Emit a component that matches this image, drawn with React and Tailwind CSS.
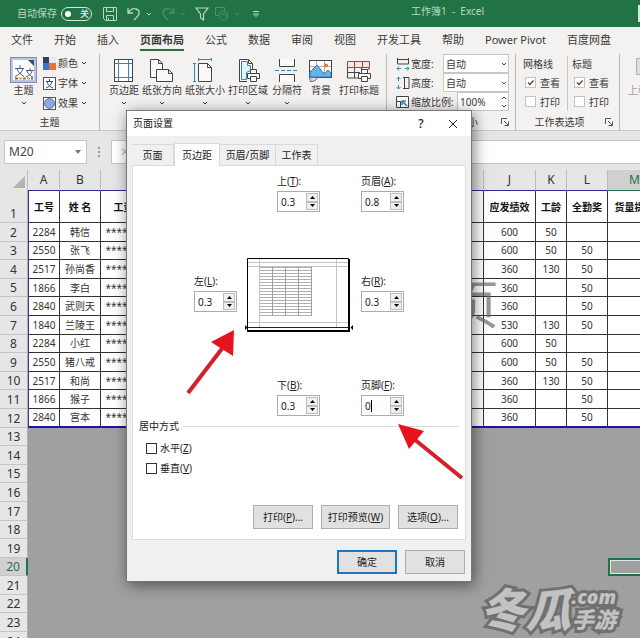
import { useState } from "react"
import clsx from "clsx"

const TABS = ["文件", "开始", "插入", "页面布局", "公式", "数据", "审阅", "视图", "开发工具", "帮助", "Power Pivot", "百度网盘"]

const ROWS = [
  ["2284", "韩信", "600", "50", ""],
  ["2550", "张飞", "600", "50", "50"],
  ["2517", "孙尚香", "360", "130", "50"],
  ["1866", "李白", "360", "", "50"],
  ["2840", "武则天", "360", "", "50"],
  ["1840", "兰陵王", "530", "130", "50"],
  ["2284", "小红", "600", "50", ""],
  ["2550", "猪八戒", "600", "50", "50"],
  ["2517", "和尚", "360", "130", "50"],
  ["1866", "猴子", "360", "", "50"],
  ["2840", "宫本", "360", "", "50"],
]

const EMPTY_ROWS = [13, 14, 15, 16, 17, 18, 19, 20, 21, 22, 23, 24]

// small shared pieces

function Chevron({ className }) {
  return (
    <svg viewBox="0 0 8 8" className={clsx("h-2 w-2 shrink-0", className)} fill="none" stroke="currentColor">
      <path d="M2 3l2 2 2-2" />
    </svg>
  )
}

function Launcher() {
  return (
    <button className="mr-1 flex h-3 w-3 items-center justify-center" aria-label="更多选项">
      <svg viewBox="0 0 8 8" className="h-2 w-2" fill="none" stroke="#555">
        <path d="M0.5 6V0.5H6M3 3l4 4M7.5 3.5v4h-4" />
      </svg>
    </button>
  )
}

// ribbon icons

const MarginsIcon = () => (
  <svg viewBox="0 0 28 26" className="h-[26px] w-7" fill="none">
    <rect x="4.5" y="2.5" width="18" height="22" fill="#fff" stroke="#444" />
    <path d="M8.5 3v21M18.5 3v21M5 6.5h17M5 20.5h17" stroke="#2b8ac6" />
  </svg>
)

const OrientationIcon = () => (
  <svg viewBox="0 0 28 26" className="h-[26px] w-7" fill="#fafafa" stroke="#444">
    <path d="M2.5 20.5v-18h8l4 4v14zM10.5 2.5v4h4" />
    <path d="M8.5 12.5h12l4 4v8h-16zM20.5 12.5v4h4" />
  </svg>
)

const SizeIcon = () => (
  <svg viewBox="0 0 28 26" className="h-[26px] w-7" fill="none">
    <path d="M7.5 6.5h9l4 4v14h-13zM16.5 6.5v4h4" fill="#fafafa" stroke="#444" />
    <path d="M7 2.5h14M7.5 1v3M20.5 1v3M3.5 6v19M2 6.5h3M2 24.5h3" stroke="#2b8ac6" />
  </svg>
)

const Printer = ({ x, y }) => (
  <g transform={`translate(${x} ${y})`} fill="#fafafa" stroke="#444">
    <path d="M3.5 4v-3.5h6V4M0.5 4.5h12v5h-12z" />
    <path d="M3.5 7.5h6v5h-6z" />
  </g>
)

const PrintAreaIcon = () => (
  <svg viewBox="0 0 28 26" className="h-[26px] w-7" fill="none">
    <path d="M5.5 24.5v-22h9l4 4v6M14.5 2.5v4h4" fill="#fafafa" stroke="#444" />
    <path d="M7.5 22.5v-18h6v4h3v5l-4 2v7z" fill="#e3f1fa" stroke="#2b8ac6" />
    <path d="M5 24.5h8" stroke="#444" />
    <Printer x={13} y={12} />
  </svg>
)

const BreaksIcon = () => (
  <svg viewBox="0 0 28 26" className="h-[26px] w-7" fill="none" stroke="#444">
    <path d="M6.5 2v7.5h15V2M6.5 25v-7.500h15V25" fill="#fafafa" />
    <path d="M2 13.5h24" stroke="#2b8ac6" strokeDasharray="4 2" />
  </svg>
)

const BackgroundIcon = () => (
  <svg viewBox="0 0 28 26" className="h-[26px] w-7" fill="none">
    <rect x="2.5" y="3.5" width="22" height="17" fill="#fff" stroke="#444" />
    <path d="M9.5 4v16M17.5 4v16M3 9.5h21M3 15.5h21" stroke="#b5b5b5" />
    <path d="M3 20v-5l7-7 7 9 4-4 3 3v4z" fill="#6db1e2" stroke="#2b7cc0" />
    <circle cx="19" cy="8.5" r="2" fill="#e07b35" />
    <path d="M2.5 20.5l1 4c3 0 6-1 7-4z" fill="#ddd" stroke="#666" />
  </svg>
)

const TitlesIcon = () => (
  <svg viewBox="0 0 28 26" className="h-[26px] w-7" fill="none">
    <path d="M2.5 10v11h11M9.5 10v11M3 15.5h12M16.5 10v4M24 10v3" stroke="#444" />
    <path d="M2.5 4.5h22v6h-22zM9.5 4.5v6M17.5 4.5v6" fill="#fbe6e6" stroke="#d13438" />
    <Printer x={13} y={12} />
  </svg>
)

const PAGE_SETUP = [
  { label: "页边距", icon: <MarginsIcon />, width: "w-[30px]", menu: true },
  { label: "纸张方向", icon: <OrientationIcon />, width: "w-10", menu: true },
  { label: "纸张大小", icon: <SizeIcon />, width: "w-10", menu: true },
  { label: "打印区域", icon: <PrintAreaIcon />, width: "w-10", menu: true },
  { label: "分隔符", icon: <BreaksIcon />, width: "w-[32px]", menu: true },
  { label: "背景", icon: <BackgroundIcon />, width: "w-[30px]" },
  { label: "打印标题", icon: <TitlesIcon />, width: "w-10" },
]

function TitleBar() {
  return (
    <header className="flex h-[27px] shrink-0 items-center bg-[#217346] text-[10px] text-[#b9d8c5]">
      <div className="flex w-[411px] shrink-0 items-center pl-[17px]">
        <span>自动保存</span>
        <button className="ml-1 flex h-[14px] w-[31px] items-center justify-between rounded-full border border-[#d5e8dc] px-0.5 text-[9px] leading-3 text-white" aria-label="自动保存 关">
          <span className="ml-px h-1.5 w-1.5 rounded-full bg-white" />
          <span>关</span>
        </button>
        <svg viewBox="0 0 14 14" className="ml-[11px] h-3.5 w-3.5" fill="none" stroke="#b9d8c5">
          <path d="M0.5 0.5h13v13h-11l-2-2zM3.5 0.5v4h7v-4M3.5 13.5v-5h7v5M5.5 11v2" />
        </svg>
        <svg viewBox="0 0 14 14" className="ml-2.5 h-3.5 w-3.5" fill="none" stroke="#b9d8c5" strokeWidth="1.3">
          <path d="M1 1v5h5M1 6c2-3 5-5 8-4 4 1 4 5 1 8l-3 3" />
        </svg>
        <Chevron className="ml-1" />
        <svg viewBox="0 0 14 14" className="ml-2 h-3.5 w-3.5" fill="none" stroke="#4c9069" strokeWidth="1.3">
          <path d="M13 1v5H8M13 6c-2-3-5-5-8-4-4 1-4 5-1 8l3 3" />
        </svg>
        <Chevron className="ml-1 text-[#4c9069]" />
        <svg viewBox="0 0 14 14" className="ml-2 h-3.5 w-3.5" fill="none" stroke="#b9d8c5" strokeWidth="1.2">
          <path d="M1 1h12L8.500 7v6l-3-2V7z" />
        </svg>
        <svg viewBox="0 0 14 14" className="ml-1.5 h-3.5 w-3.5" fill="none" stroke="#4c9069">
          <path d="M4 8.5H0.5v-8h9V4" />
          <circle cx="8.5" cy="8.5" r="4.5" />
          <path d="M6 7h5v4" />
        </svg>
        <Chevron className="ml-1 text-[#4c9069]" />
        <svg viewBox="0 0 8 8" className="ml-[11px] h-2 w-2" fill="none" stroke="#b9d8c5">
          <path d="M1 1.5h6M1.5 4l2.5 2.5L6.5 4z" />
        </svg>
      </div>
      <span className="whitespace-pre pb-1">工作簿1  -  Excel</span>
      <button className="ml-auto h-[17px] w-0.5 bg-[#d5e8dc]" aria-label="登录" />
    </header>
  )
}

function RibbonGroup({ label, className, launcher, children }) {
  return (
    <section className={clsx("flex shrink-0 flex-col border-r border-[#bdbbb9]", className)}>
      <div className="flex-1">{children}</div>
      <div className="flex h-4 items-center">
        <span className="flex-1 text-center">{label}</span>
        {launcher && <Launcher />}
      </div>
    </section>
  )
}

function ThemeRow({ icon, label }) {
  return (
    <button className="flex h-5 items-center">
      <svg viewBox="0 0 13 13" className="mr-0.5 h-[13px] w-[13px]">{icon}</svg>
      {label}
      <Chevron className="ml-0.5" />
    </button>
  )
}

function CheckOption({ label, checked }) {
  return (
    <label className="flex h-[19px] items-center gap-1">
      <span className="relative flex h-[11px] w-[11px]">
        <input type="checkbox" defaultChecked={checked} className="peer h-[11px] w-[11px] appearance-none border border-[#c3c3c3] bg-white" />
        <svg viewBox="0 0 11 11" className="pointer-events-none absolute inset-0 hidden h-[11px] w-[11px] peer-checked:block" fill="none" stroke="#444" strokeWidth="1.2">
          <path d="M3 5.5l2 2 3.5-4" />
        </svg>
      </span>
      {label}
    </label>
  )
}

function ScaleRow({ id, label, icon, children }) {
  return (
    <div className="flex h-[19px] items-center">
      <svg viewBox="0 0 14 14" className="mr-px h-3.5 w-3.5 shrink-0" fill="none" stroke="#444">{icon}</svg>
      <label htmlFor={id} className="flex-1 whitespace-nowrap">{label}</label>
      {children}
    </div>
  )
}

function AutoSelect({ id }) {
  return (
    <div className="relative h-[19px] w-[66px]">
      <select id={id} className="block h-[19px] w-full appearance-none border border-[#c8c6c4] bg-white pl-0.5 text-[10px] leading-4">
        <option>自动</option>
      </select>
      <Chevron className="pointer-events-none absolute right-px top-1.5" />
    </div>
  )
}

function Ribbon() {
  return (
    <div className="shrink-0 border-b border-[#c8c8c8] bg-[#f3f2f1] text-[#3b3a39]">
      <nav className="flex h-[27px] gap-[21px] overflow-hidden pl-[11px] pt-1 text-[11px] leading-4">
        {TABS.map((tab) => (
          <button
            key={tab}
            className={clsx("h-5 shrink-0 whitespace-nowrap border-b-2", tab === "页面布局" ? "border-[#217346] font-bold" : "border-transparent")}
          >
            {tab}
          </button>
        ))}
      </nav>

      <div className="flex h-[76px] overflow-hidden text-[10px] leading-[14px]">
        <RibbonGroup label="主题" className="w-[100px]">
          <div className="flex pt-[3px]">
            <button className="ml-2.5 flex w-[27px] flex-col items-center">
              <svg viewBox="0 0 27 26" className="h-[26px] w-[27px]" fill="none">
                <rect x="0.5" y="0.5" width="26" height="25" fill="#bcc6de" stroke="#7d8eb5" />
                <path d="M3 3h15l6 6v14H3z" fill="#fff" />
                <path d="M18 3l6 6V3z" fill="#3c4a78" />
                <path d="M10 8v3M5 11.5h9M7 11.5c1 4 4 6 7 8M13 11.5c-1 4-4 6-8 8M20 11v2M16 13.5h8M17 14c1 3 3 5 6 6M22 14c-1 3-3 5-6 6" stroke="#4d5b85" />
                <path d="M5 21.5h3" stroke="#d24726" strokeWidth="2" />
                <path d="M9 21.5h3" stroke="#e8a33d" strokeWidth="2" />
                <path d="M13 21.5h3" stroke="#5a9e48" strokeWidth="2" />
                <path d="M17 21.5h3" stroke="#e8a33d" strokeWidth="2" />
                <path d="M21 21.5h2" stroke="#2f6fb5" strokeWidth="2" />
              </svg>
              主题
              <Chevron className="mt-0.5" />
            </button>
            <div className="-mt-1 ml-1.5">
              <ThemeRow
                label="颜色"
                icon={
                  <>
                    <path d="M0 0h6v6H0z" fill="#2f3e66" />
                    <path d="M6 0h7v6H6z" fill="#e6e9ef" />
                    <path d="M0 6h6v7H0z" fill="#3f73c4" />
                    <path d="M6 6h7v7H6z" fill="#e2733a" />
                  </>
                }
              />
              <ThemeRow
                label="字体"
                icon={
                  <g fill="none" stroke="#555">
                    <rect x="0.5" y="0.5" width="12" height="12" fill="#fff" />
                    <path d="M6.5 2v2M3 4.5h7M4 5c1 3 3 5 6 6M9 5c-1 3-3 5-6 6" stroke="#37507f" />
                  </g>
                }
              />
              <ThemeRow
                label="效果"
                icon={
                  <>
                    <rect x="0.5" y="0.5" width="12" height="12" fill="#fff" stroke="#555" />
                    <circle cx="6.5" cy="6.5" r="5" fill="#8fa9dd" stroke="#5a78bd" />
                  </>
                }
              />
            </div>
          </div>
        </RibbonGroup>

        <RibbonGroup label="页面设置" className="w-[287px]" launcher>
          <div className="flex gap-[3px] pl-[9px] pt-[3px]">
            {PAGE_SETUP.map((item) => (
              <button key={item.label} className={clsx("flex flex-col items-center whitespace-nowrap", item.width)}>
                {item.icon}
                {item.label}
                {item.menu && <Chevron className="mt-0.5" />}
              </button>
            ))}
          </div>
        </RibbonGroup>

        <RibbonGroup label="调整为合适大小" className="w-[129px]" launcher>
          <div className="pl-[9px] pr-1.5">
            <ScaleRow
              id="fit-width"
              label="宽度:"
              icon={
                <>
                  <path d="M1.5 1v6h11V1M1.5 2.5h11" />
                  <path d="M1 11.5h4M9 11.5h4M3 9.5l-2 2 2 2M11 9.5l2 2-2 2" stroke="#2b8ac6" />
                </>
              }
            >
              <AutoSelect id="fit-width" />
            </ScaleRow>
            <ScaleRow
              id="fit-height"
              label="高度:"
              icon={
                <>
                  <path d="M7 1.5h6v11H7M8.5 1.5v11" />
                  <path d="M2.5 1v4M2.5 9v4M0.5 3l2-2 2 2M0.5 11l2 2 2-2" stroke="#2b8ac6" />
                </>
              }
            >
              <AutoSelect id="fit-height" />
            </ScaleRow>
            <ScaleRow
              id="fit-scale"
              label="缩放比例:"
              icon={
                <>
                  <path d="M0.5 1.5h12v11H0.5zM0.5 6.5h4v6" fill="#fff" />
                  <path d="M11 11L6 6M6 10V6h4" stroke="#2b8ac6" strokeWidth="1.5" />
                </>
              }
            >
              <div className="flex h-[19px] w-[52px] items-center border border-[#c8c6c4] bg-white">
                <input id="fit-scale" defaultValue="100%" className="w-full min-w-0 pl-0.5 text-[10px] outline-none" />
                <div className="flex flex-col">
                  <button aria-label="增大"><Chevron className="rotate-180" /></button>
                  <button aria-label="减小"><Chevron /></button>
                </div>
              </div>
            </ScaleRow>
          </div>
        </RibbonGroup>

        <RibbonGroup label="工作表选项" className="w-[104px]" launcher>
          <div className="flex">
            <fieldset className="my-0.5 w-[52px] border-r border-[#c8c6c4] pl-[7px]">
              <div className="h-[17px] leading-4">网格线</div>
              <div className="pl-0.5">
                <CheckOption label="查看" checked />
                <CheckOption label="打印" />
              </div>
            </fieldset>
            <fieldset className="my-0.5 pl-1">
              <div className="h-[17px] leading-4">标题</div>
              <div className="pl-0.5">
                <CheckOption label="查看" checked />
                <CheckOption label="打印" />
              </div>
            </fieldset>
          </div>
        </RibbonGroup>

        <div className="flex shrink-0 pl-2 pt-[3px] text-[#a19f9d]">
          <button className="flex flex-col items-center whitespace-nowrap">
            <svg viewBox="0 0 28 26" className="h-[26px] w-7" fill="#e1dfdd" stroke="#b3b0ad">
              <path d="M2.5 1.5h14v16h-14z" />
            </svg>
            上移一层
          </button>
        </div>
      </div>
    </div>
  )
}

function FormulaBar() {
  return (
    <div className="flex h-[39px] shrink-0 bg-[#e6e6e6] pb-1.5 pl-1 pt-[9px] text-xs text-[#444]">
      <div className="flex w-[83px] items-center justify-between border border-[#c6c6c6] bg-white pr-1">
        <input aria-label="名称框" defaultValue="M20" className="w-14 pl-1 outline-none" />
        <svg viewBox="0 0 8 8" className="h-2 w-2" fill="#777">
          <path d="M1 2h6L4 6z" />
        </svg>
      </div>
      <svg viewBox="0 0 24 24" className="h-6 w-6" fill="#999">
        <path d="M11 7h2v2h-2zM11 11h2v2h-2zM11 15h2v2h-2z" />
      </svg>
      <div className="flex flex-1 items-center border border-r-0 border-[#c6c6c6] bg-white">
        <span className="w-16 pl-2 text-[#bbb]">✕</span>
        <input aria-label="编辑栏" className="flex-1 outline-none" />
      </div>
    </div>
  )
}

function ColHead({ children, active }) {
  return (
    <th
      scope="col"
      className={clsx(
        "h-[21px] border-b border-r border-r-[#bdbdbd] p-0 font-normal",
        active ? "border-b-[#217346] bg-[#d0d0d0] text-[#217346]" : "border-b-[#2a2a9c] bg-[#e6e6e6]"
      )}
    >
      {children}
    </th>
  )
}

function RowHead({ n }) {
  return (
    <th
      scope="row"
      className={clsx(
        "border-b border-b-[#c4c4c4] p-0 text-center align-bottom text-xs font-normal leading-4",
        n === 20 ? "border-r-2 border-r-[#217346] bg-[#d0d0d0] text-[#217346]" : "border-r border-r-[#b0b0b0] bg-[#e6e6e6] text-[#333]"
      )}
    >
      {n}
    </th>
  )
}

function Cell({ children, first, last, className }) {
  return (
    <td
      className={clsx(
        "overflow-hidden whitespace-nowrap border-r border-r-[#333] bg-white p-0 text-center leading-[14px]",
        first && "border-l border-l-[#3a32a8]",
        last ? "border-b-2 border-b-[#1d149a]" : "border-b border-b-[#333]",
        className
      )}
    >
      {children}
    </td>
  )
}

function Sheet() {
  return (
    <div className="relative min-h-0 flex-1 overflow-hidden bg-[#a0a0a0]">
      <table className="h-[481px] w-full min-w-[662px] table-fixed border-separate border-spacing-0 text-[10px] text-[#333]">
        <colgroup>
          <col className="w-7" />
          <col className="w-8" />
          <col className="w-[41px]" />
          <col className="w-[76px]" />
          <col className="w-[265px]" />
          <col className="w-[42px]" />
          <col className="w-[52px]" />
          <col className="w-[31px]" />
          <col className="w-[41px]" />
          <col className="w-[54px]" />
          <col />
        </colgroup>
        <thead>
          <tr className="text-xs leading-4">
            <th className="h-[21px] border-r border-[#bdbdbd] bg-[#e6e6e6] p-0">
              <svg viewBox="0 0 28 20" className="block h-5 w-7" fill="#b3b3b3">
                <path d="M25 5v12H13z" />
              </svg>
            </th>
            <ColHead>A</ColHead>
            <ColHead>B</ColHead>
            <ColHead>C</ColHead>
            <ColHead />
            <ColHead>I</ColHead>
            <ColHead>J</ColHead>
            <ColHead>K</ColHead>
            <ColHead>L</ColHead>
            <ColHead active>M</ColHead>
            <ColHead />
          </tr>
        </thead>
        <tbody>
          <tr className="h-8 font-bold text-[#111]">
            <RowHead n={1} />
            <Cell first>工号</Cell>
            <Cell>姓 名</Cell>
            <Cell>工资卡账号</Cell>
            <Cell />
            <Cell>基本<br />工资</Cell>
            <Cell>应发绩效</Cell>
            <Cell>工龄</Cell>
            <Cell>全勤奖</Cell>
            <Cell>货量提成</Cell>
            <Cell />
          </tr>
          {ROWS.map(([id, name, bonus, years, full], i) => {
            const last = i === ROWS.length - 1
            return (
              <tr key={i}>
                <RowHead n={i + 2} />
                <Cell first last={last}>{id}</Cell>
                <Cell last={last}>{name}</Cell>
                <Cell last={last}>************</Cell>
                <Cell last={last} />
                <Cell last={last} />
                <Cell last={last}>{bonus}</Cell>
                <Cell last={last}>{years}</Cell>
                <Cell last={last}>{full}</Cell>
                <Cell last={last} />
                <Cell last={last} />
              </tr>
            )
          })}
          {EMPTY_ROWS.map((n) => (
            <tr key={n}>
              <RowHead n={n} />
              <td colSpan={8} />
              <td className={clsx("p-0", n === 20 && "border-2 border-[#217346] outline-1 -outline-offset-3 outline-[#dfe9e3]")} />
              <td />
            </tr>
          ))}
        </tbody>
      </table>
      {/* page-break preview mark */}
      <div className="pointer-events-none absolute left-[447px] top-[98px] text-[52px] leading-[72px] text-[#6b6b6b]/70">页</div>
    </div>
  )
}

function SpinField({ id, label, hotkey, value, focused, className }) {
  const [val, setVal] = useState(value)
  const step = (d) => setVal((v) => String(Math.max(0, Math.round((Number(v) + d) * 10) / 10)))

  return (
    <div className={clsx("w-[43px]", className)}>
      <label htmlFor={id} className="block h-[18px] whitespace-nowrap leading-4">
        {label}(<u>{hotkey}</u>):
      </label>
      <div className="flex h-[21px] border border-[#ababab] bg-white p-px">
        <div className="flex flex-1 items-center pl-0.5">
          <input
            id={id}
            value={val}
            onChange={(e) => setVal(e.target.value)}
            className={clsx("min-w-0 leading-4 outline-none", focused ? "w-1.5" : "w-full")}
          />
          {focused && <span className="h-3 w-px bg-black" />}
        </div>
        <div className="flex w-3 flex-col">
          <button onClick={() => step(0.1)} aria-label="增大" className="flex flex-1 items-center justify-center border border-[#bdbdbd] bg-[#f0f0f0]">
            <svg viewBox="0 0 5 3" className="h-[3px] w-[5px]"><path d="M0 3h5L2.5 0z" /></svg>
          </button>
          <button onClick={() => step(-0.1)} aria-label="减小" className="flex flex-1 items-center justify-center border border-[#bdbdbd] bg-[#f0f0f0]">
            <svg viewBox="0 0 5 3" className="h-[3px] w-[5px]"><path d="M0 0h5L2.5 3z" /></svg>
          </button>
        </div>
      </div>
    </div>
  )
}

function PagePreview() {
  const lines = Array.from({ length: 17 }, (_, i) => 10.5 + i * 3)
  return (
    <svg viewBox="0 0 108 75" className="h-[75px] w-[108px]" fill="none">
      <path d="M2.5 1.5h101v72h-101z" fill="#fff" stroke="#000" />
      <path d="M104 2v73M2 74h103" stroke="#000" strokeWidth="2" />
      <path d="M3 5.5h100M3 9.5h100M3 65.500h100M14.5 2v68M91.5 2v68" stroke="#c4c4c4" />
      {lines.map((y) => (
        <path key={y} d={`M15 ${y}h51`} stroke="#b0b0b0" />
      ))}
      <path d="M27.500 10v49M40.500 10v49M53.500 10v49M66.500 10v49" stroke="#a0a0a0" />
      <path d="M3 70.5h100" stroke="#222" />
      <path d="M0 68l2.500 2.500L0 73zM108 68l-2.500 2.500 2.500 2.500z" fill="#000" />
    </svg>
  )
}

function DialogButton({ children, primary, className }) {
  return (
    <button
      className={clsx(
        "h-6 whitespace-nowrap bg-[#e1e1e1] leading-4",
        primary ? "border-2 border-[#1f72c4]" : "border border-[#adadad]",
        className
      )}
    >
      {children}
    </button>
  )
}

function CenterOption({ label, hotkey }) {
  return (
    <label className="flex h-5 items-center gap-[3px]">
      <input type="checkbox" className="h-[11px] w-[11px] appearance-none border border-[#333] bg-white checked:bg-[#1f72c4]" />
      <span>{label}(<u>{hotkey}</u>)</span>
    </label>
  )
}

const DIALOG_TABS = [
  ["页面", "w-[42px]"],
  ["页边距", "w-[46px]"],
  ["页眉/页脚", "w-[56px]"],
  ["工作表", "w-[42px]"],
]

function PageSetupDialog() {
  return (
    <div
      role="dialog"
      aria-label="页面设置"
      className="absolute left-[126px] top-[110px] w-[346px] border border-[#777] bg-[#f0f0f0] text-[10px] text-[#222] shadow-[2px_3px_14px_rgba(0,0,0,0.5)]"
    >
      <div className="flex h-[25px] items-center bg-white pl-1.5">
        <span className="flex-1">页面设置</span>
        <button className="w-5 text-xs font-medium" aria-label="帮助">?</button>
        <button className="ml-4 mr-3 flex h-5 w-3 items-center justify-center" aria-label="关闭">
          <svg viewBox="0 0 10 10" className="h-2.5 w-2.5 shrink-0" stroke="#222">
            <path d="M1 1l8 8M9 1L1 9" />
          </svg>
        </button>
      </div>

      <div className="px-[5px] pt-1.5">
        <div className="flex h-[23px] items-end">
          {DIALOG_TABS.map(([name, width]) => (
            <button
              key={name}
              className={clsx(
                "whitespace-nowrap border border-b-0 border-[#d9d9d9] leading-4",
                width,
                name === "页边距" ? "-mb-px h-[23px] bg-white" : "h-[21px] border-l-0"
              )}
            >
              {name}
            </button>
          ))}
        </div>

        <div className="border border-[#dcdcdc] bg-white px-1.5 pb-2.5 pt-[7px]">
          <div className="ml-[55px] flex w-[210px] flex-col gap-[45px]">
            <div className="flex justify-end gap-[41px]">
              <SpinField id="m-top" label="上" hotkey="T" value="0.3" />
              <SpinField id="m-header" label="页眉" hotkey="A" value="0.8" />
            </div>
            <div className="flex items-start justify-between">
              <SpinField id="m-left" label="左" hotkey="L" value="0.3" className="mt-4" />
              <PagePreview />
              <SpinField id="m-right" label="右" hotkey="R" value="0.3" className="mt-4" />
            </div>
            <div className="flex justify-end gap-[41px]">
              <SpinField id="m-bottom" label="下" hotkey="B" value="0.3" />
              <SpinField id="m-footer" label="页脚" hotkey="F" value="0" focused />
            </div>
          </div>

          <fieldset className="mt-0.5">
            <div className="flex h-4 items-center gap-1">
              <span>居中方式</span>
              <span className="h-px flex-1 bg-[#dcdcdc]" />
            </div>
            <div className="pl-[7px] pt-1">
              <CenterOption label="水平" hotkey="Z" />
              <CenterOption label="垂直" hotkey="V" />
            </div>
          </fieldset>

          <div className="mt-[27px] flex justify-end gap-2 pr-px">
            <DialogButton className="w-[60px]">打印(<u>P</u>)...</DialogButton>
            <DialogButton className="w-[69px]">打印预览(<u>W</u>)</DialogButton>
            <DialogButton className="w-[60px]">选项(<u>O</u>)...</DialogButton>
          </div>
        </div>
      </div>

      <div className="flex justify-end gap-2 px-1.5 pb-[7px] pt-2.5">
        <DialogButton primary className="w-[60px]">确定</DialogButton>
        <DialogButton className="w-[60px]">取消</DialogButton>
      </div>

      {/* callout arrows */}
      <svg viewBox="127 111 346 471" className="pointer-events-none absolute left-0 top-0 h-[471px] w-[346px]">
        <g fill="#e8121c" stroke="#d3202b">
          <path d="M188 393L224 346" strokeWidth="4" />
          <path d="M234 330L211 342L233 356z" stroke="none" />
          <path d="M462 478L414 439" strokeWidth="4" />
          <path d="M398 424L424 431L409 449z" stroke="none" />
        </g>
      </svg>
    </div>
  )
}

function SiteMark() {
  return (
    <div className="pointer-events-none absolute bottom-1 right-6 flex items-center font-black italic text-[#c2c2c2] [-webkit-text-stroke:6px_#707070] [paint-order:stroke_fill]">
      <span className="text-[46px] leading-[50px]">冬瓜</span>
      <span className="flex flex-col items-end">
        <span className="text-[19px] leading-5">.com</span>
        <span className="text-[22px] leading-6">手游</span>
      </span>
    </div>
  )
}

export default function App() {
  return (
    <div className="relative flex h-screen w-full flex-col overflow-hidden bg-[#a0a0a0] font-['Noto_Sans','Noto_Sans_CJK_SC',sans-serif]">
      <TitleBar />
      <Ribbon />
      <FormulaBar />
      <Sheet />
      <PageSetupDialog />
      <SiteMark />
    </div>
  )
}
